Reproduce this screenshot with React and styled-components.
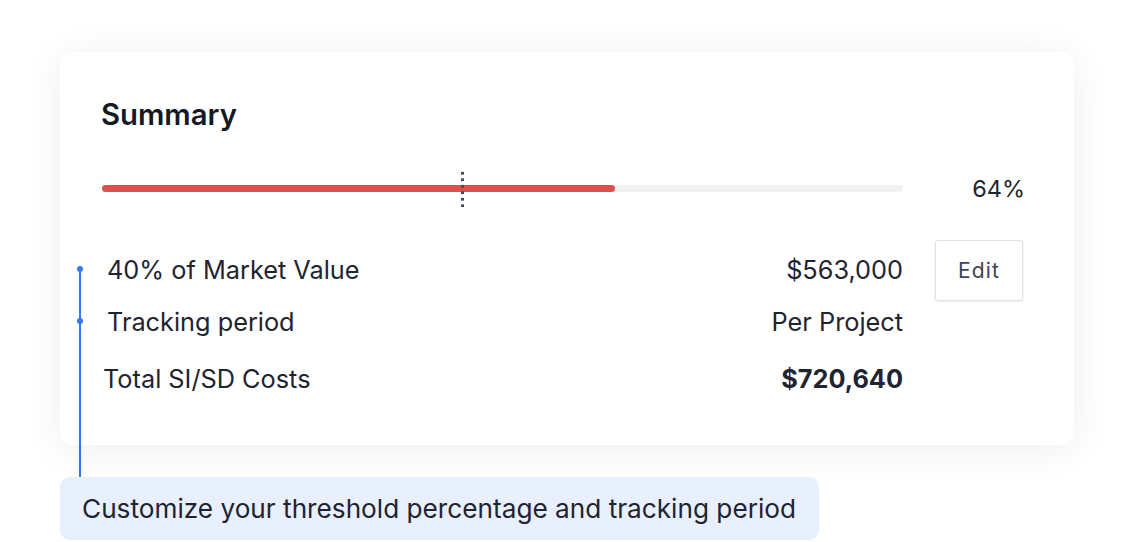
import styled, { createGlobalStyle } from "styled-components";

const GlobalStyle = createGlobalStyle`
  html, body {
    margin: 0;
    padding: 0;
    background: #ffffff;
  }
  body {
    font-family: Inter, "Noto Sans", "Liberation Sans", sans-serif;
    color: #1e2430;
  }
`;

const Page = styled.div`
  position: relative;
  width: 1134px;
  height: 542px;
  box-sizing: border-box;
  padding: 52px 60px 0 60px;
  overflow: hidden;
`;

const Card = styled.section`
  width: 1014px;
  height: 393px;
  box-sizing: border-box;
  padding: 45px 49px 0 41px;
  background: #ffffff;
  border-radius: 12px;
  box-shadow: 0 4px 40px rgba(0, 0, 0, 0.07);
`;

const Title = styled.h2`
  margin: 0;
  font-size: 29.3px;
  line-height: 36px;
  font-weight: 600;
  color: #141a24;
`;

const Grid = styled.div`
  display: grid;
  grid-template-columns: 802px 1fr;
  column-gap: 32px;
  align-items: center;
`;

const ProgressRow = styled(Grid)`
  height: 36px;
  margin-top: 37px;
`;

const Track = styled.div`
  position: relative;
  height: 7px;
  margin-left: 1px;
  border-radius: 4px;
  background: #f1f1f1;
`;

const Fill = styled.div`
  height: 100%;
  border-radius: 4px;
  background: #db504b;
`;

const Marker = styled.div`
  position: absolute;
  top: -15px;
  width: 3px;
  height: 37px;
  margin-left: -1px;
  background-image: radial-gradient(circle, #444b58 1.4px, transparent 1.6px);
  background-size: 3px 6.5px;
  background-repeat: repeat-y;
`;

const Percent = styled.div`
  justify-self: end;
  font-size: 23.5px;
  color: #1e2430;
`;

const Rows = styled.div`
  margin-top: 32px;
`;

const Row = styled(Grid)`
  height: ${(p) => p.$height || 46}px;
  margin-top: ${(p) => p.$gap || 0}px;
`;

const Line = styled.div`
  display: flex;
  justify-content: space-between;
  align-items: center;
  padding-left: ${(p) => (p.$indent ? 6 : 2)}px;
  font-size: 25.3px;
  color: #1e2430;
`;

const Value = styled.span`
  font-weight: ${(p) => (p.$bold ? 700 : 400)};
`;

const Actions = styled.div`
  align-self: start;
  padding-top: 2px;
`;

const EditButton = styled.button`
  display: block;
  width: 88px;
  height: 61px;
  box-sizing: border-box;
  border: 1px solid #e0e0e0;
  border-radius: 3px;
  background: #ffffff;
  box-shadow: 0 1px 3px rgba(0, 0, 0, 0.08);
  font-family: inherit;
  font-size: 21px;
  letter-spacing: 1.2px;
  color: #3c4452;
  cursor: pointer;
`;

const Callout = styled.div`
  display: inline-flex;
  align-items: center;
  margin-top: 32px;
  height: 63px;
  padding: 0 23px 0 22px;
  border-radius: 10px;
  background: #e8effd;
  font-size: 26.2px;
  color: #1e2430;
`;

const Guide = styled.div`
  position: absolute;
  left: 79px;
  top: 268px;
  width: 2px;
  height: 209px;
  background: #3478f6;
`;

const GuideDot = styled.span`
  position: absolute;
  left: -2px;
  top: ${(p) => p.$top}px;
  width: 6px;
  height: 6px;
  border-radius: 50%;
  background: #3478f6;
`;

const rows = [
  { label: "40% of Market Value", value: "$563,000", indent: true, edit: true, height: 60 },
  { label: "Tracking period", value: "Per Project", indent: true },
  { label: "Total SI/SD Costs", value: "$720,640", bold: true, gap: 11 },
];

export default function App() {
  const progress = 64;
  const threshold = 45;

  return (
    <Page>
      <GlobalStyle />
      <Card>
        <Title>Summary</Title>
        <ProgressRow>
          <Track>
            <Fill style={{ width: `${progress}%` }} />
            <Marker style={{ left: `${threshold}%` }} />
          </Track>
          <Percent>{progress}%</Percent>
        </ProgressRow>
        <Rows>
          {rows.map((r) => (
            <Row key={r.label} $height={r.height} $gap={r.gap}>
              <Line $indent={r.indent}>
                <span>{r.label}</span>
                <Value $bold={r.bold}>{r.value}</Value>
              </Line>
              <Actions>{r.edit && <EditButton>Edit</EditButton>}</Actions>
            </Row>
          ))}
        </Rows>
      </Card>
      <Callout>Customize your threshold percentage and tracking period</Callout>
      <Guide>
        <GuideDot $top={-2} />
        <GuideDot $top={50} />
      </Guide>
    </Page>
  );
}
